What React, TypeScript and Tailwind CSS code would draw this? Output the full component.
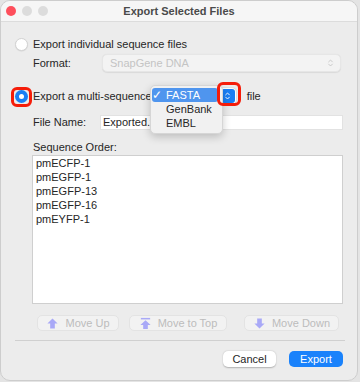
import { ChevronsUpDown } from "lucide-react";

const sequences = ["pmECFP-1", "pmEGFP-1", "pmEGFP-13", "pmEGFP-16", "pmEYFP-1"];

function UpArrow({ top }: { top?: boolean }) {
  return (
    <svg width="13" height="13" viewBox="0 0 14 14" className="shrink-0">
      {top && <rect x="2" y="1" width="10" height="1.6" fill="#a9a9f7" />}
      <path d={top ? "M7 3.5 L12.5 8.5 H9.5 V13 H4.5 V8.5 H1.5 Z" : "M7 1.5 L12.5 7 H9.5 V12.5 H4.5 V7 H1.5 Z"} fill="#a9a9f7" />
    </svg>
  );
}

function DownArrow() {
  return (
    <svg width="13" height="13" viewBox="0 0 14 14" className="shrink-0">
      <path d="M7 12.5 L12.5 7 H9.5 V1.5 H4.5 V7 H1.5 Z" fill="#a9a9f7" />
    </svg>
  );
}

function MoveButton({ label, icon, width }: { label: string; icon: React.ReactNode; width: string }) {
  return (
    <div className={`${width} h-[16px] flex items-center justify-center gap-[6px] rounded-[5px] bg-[#f2f2f2] border border-[#e3e3e3] text-[#bcbcbc]`}>
      {icon}
      <span>{label}</span>
    </div>
  );
}

export default function App() {
  return (
    <div className="w-[360px] h-[382px] bg-[#e4e4e4] font-['Liberation_Sans',Arial,sans-serif] text-[11px] leading-[14px] text-[#262626]">
      <div className="w-[358px] h-[381px] rounded-[10px] overflow-hidden border border-[#cdcdcd] bg-[#ececec] flex flex-col">
        {/* title bar */}
        <div className="h-[21px] shrink-0 bg-[#f6f6f6] border-b border-[#dcdcdc] relative flex items-center justify-center">
          <div className="absolute left-[5px] top-[5px] flex gap-[6px]">
            <span className="w-[10px] h-[10px] rounded-full bg-[#fe4f5c]" />
            <span className="w-[10px] h-[10px] rounded-full bg-[#dcdcdc]" />
            <span className="w-[10px] h-[10px] rounded-full bg-[#dcdcdc]" />
          </div>
          <span className="font-bold text-[#4a4a4a]">Export Selected Files</span>
        </div>

        <div className="relative flex flex-col pl-[14px] pr-[14px] pt-[15px]">
          {/* option 1 */}
          <div className="flex items-center h-[14px] gap-[5px]">
            <span className="w-[13px] h-[13px] rounded-full bg-white border border-[#d3d3d3] shadow-[0_0.5px_1px_rgba(0,0,0,0.1)]" />
            <span>Export individual sequence files</span>
          </div>
          <div className="flex items-center mt-[3px] h-[18px] pl-[18px]">
            <span className="w-[69px]">Format:</span>
            <div className="flex-1 mr-[2px] h-[18px] rounded-[5px] bg-[#f3f3f3] border border-[#e6e6e6] shadow-[0_0.5px_1px_rgba(0,0,0,0.08)] flex items-center justify-between pl-[7px] pr-[5px] text-[#c4c4c4]">
              <span>SnapGene DNA</span>
              <ChevronsUpDown className="w-[9px] h-[10px] text-[#bdbdbd]" strokeWidth={2} />
            </div>
          </div>

          {/* option 2 */}
          <div className="flex items-center mt-[15px] h-[18px]">
            <span className="w-[13px] h-[13px] rounded-full bg-[#1a7ff5] flex items-center justify-center">
              <span className="w-[5px] h-[5px] rounded-full bg-white" />
            </span>
            <span className="ml-[5px]">Export a multi-sequence</span>
            <div className="ml-[2px] w-[82px] h-[16px] rounded-[4px] bg-white shadow-[0_0.5px_1.5px_rgba(0,0,0,0.25)] flex items-center justify-end pr-[1px]">
              <span className="w-[14px] h-[14px] rounded-[3px] bg-[#1a7ff5] flex items-center justify-center">
                <ChevronsUpDown className="w-[9px] h-[10px] text-white" strokeWidth={2.5} />
              </span>
            </div>
            <span className="ml-[11px]">file</span>
          </div>
          <div className="flex items-center mt-[9px] h-[16px] pl-[18px]">
            <span className="w-[67px]">File Name:</span>
            <div className="flex-1 h-[15px] bg-white border border-[#e2e2e2] flex items-center pl-[2px]">Exported.fasta</div>
          </div>

          {/* sequence list */}
          <div className="mt-[10px] pl-[18px]">Sequence Order:</div>
          <div className="mt-[1px] ml-[17px] h-[149px] bg-white border border-[#cfcfcf] pl-[3px] flex flex-col">
            {sequences.map((s) => (
              <div key={s} className="h-[14px]">{s}</div>
            ))}
          </div>

          <div className="flex items-center mt-[11px] pl-[22px]">
            <MoveButton label="Move Up" icon={<UpArrow />} width="w-[82px]" />
            <div className="w-[10px]" />
            <MoveButton label="Move to Top" icon={<UpArrow top />} width="w-[98px]" />
            <div className="w-[17px]" />
            <MoveButton label="Move Down" icon={<DownArrow />} width="w-[95px]" />
          </div>

          <div className="mt-[9px] h-px bg-[#d0d0d0] mr-[-2px]" />

          <div className="flex justify-end items-center mt-[10px] gap-[13px]">
            <div className="w-[53px] h-[16px] rounded-[5px] bg-white shadow-[0_0.5px_1.5px_rgba(0,0,0,0.25)] flex items-center justify-center">Cancel</div>
            <div className="w-[54px] h-[16px] rounded-[5px] bg-[#1a82fb] text-white flex items-center justify-center">Export</div>
          </div>

          {/* popup menu */}
          <div className="absolute left-[149px] top-[63px] w-[73px] h-[49px] rounded-[5px] bg-[#f1f1f1] border border-[#d6d6d6] shadow-[0_3px_8px_rgba(0,0,0,0.2)] pl-[1px] pr-[4px] pt-[2px] flex flex-col">
            <div className="h-[14px] rounded-[3px] bg-[#4f95ee] text-white flex items-center">
              <span className="w-[14px] text-[12px]">✓</span>
              <span>FASTA</span>
            </div>
            <div className="h-[14px] flex items-center pl-[14px]">GenBank</div>
            <div className="h-[14px] flex items-center pl-[14px]">EMBL</div>
          </div>

          {/* red highlight marks */}
          <div className="absolute left-[10px] top-[65px] w-[21px] h-[20px] rounded-[6px] border-[3px] border-[#f51d0a]" />
          <div className="absolute left-[216px] top-[60px] w-[24px] h-[24px] rounded-[6px] border-[3px] border-[#f51d0a]" />
        </div>
      </div>
    </div>
  );
}
